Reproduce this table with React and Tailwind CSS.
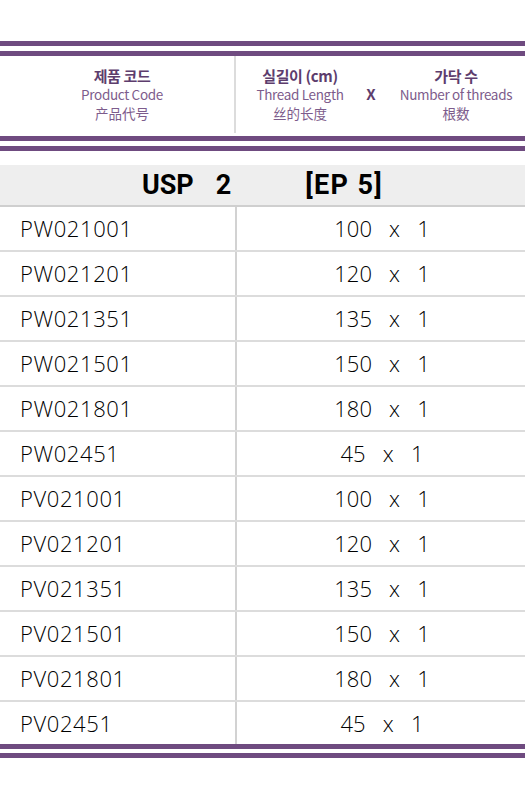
import React from "react";

const rows = [
  ["PW021001", "100"],
  ["PW021201", "120"],
  ["PW021351", "135"],
  ["PW021501", "150"],
  ["PW021801", "180"],
  ["PW02451", "45"],
  ["PV021001", "100"],
  ["PV021201", "120"],
  ["PV021351", "135"],
  ["PV021501", "150"],
  ["PV021801", "180"],
  ["PV02451", "45"],
];

function Band() {
  return <div className="h-[5px] bg-[#6f4b80]" />;
}

function HeadCell({ ko, en, zh, className = "" }) {
  return (
    <div className={"flex flex-col items-center " + className}>
      <p className="text-[15px] leading-[19px] font-bold text-[#5d3d6d] tracking-tight">
        {ko}
      </p>
      <p className="text-[13.5px] leading-[19px] text-[#7d5c8c] tracking-tight">
        {en}
      </p>
      <p className="text-[13.5px] leading-[19px] text-[#7d5c8c]">{zh}</p>
    </div>
  );
}

export default function App() {
  return (
    <section
      className="w-[525px] h-[800px] bg-white pt-[41px]"
      style={{ fontFamily: "'Open Sans', 'Noto Sans CJK KR', sans-serif" }}
    >
      {/* top bands */}
      <Band />
      <div className="h-[5px]" />
      <Band />

      {/* column titles */}
      <div
        className="flex h-[80px] pb-[3px]"
        style={{ fontFamily: "'Noto Sans CJK KR', 'Noto Sans', sans-serif" }}
      >
        <div className="w-[236px] border-r-2 border-[#dcdcdc] flex items-center justify-center pl-[10px]">
          <HeadCell ko="제품 코드" en="Product Code" zh="产品代号" />
        </div>
        <div className="flex-1 flex items-center">
          <HeadCell
            className="w-[128px]"
            ko="실길이 (cm)"
            en="Thread Length"
            zh="丝的长度"
          />
          <div className="w-[14px] text-center text-[15px] font-bold text-[#5d3d6d]">
            X
          </div>
          <HeadCell
            className="flex-1 pl-[9px]"
            ko="가닥 수"
            en="Number of threads"
            zh="根数"
          />
        </div>
      </div>

      <Band />
      <div className="h-[5px]" />
      <Band />

      {/* size header */}
      <div
        className="mt-[14px] h-[42px] bg-[#eeeeee] border-b-2 border-[#cfcfcf] flex items-center justify-center text-[27px] font-bold text-black"
        style={{ fontFamily: "Roboto, sans-serif" }}
      >
        <span>USP</span>
        <span className="ml-[22px]">2</span>
        <span className="ml-[74px] tracking-wider">[EP 5]</span>
      </div>

      {/* rows */}
      <div>
        {rows.map(([code, len], i) => (
          <div
            key={code}
            className={
              "flex text-[22px] font-light text-black " +
              (i === rows.length - 1
                ? "h-[42px]"
                : "h-[45px] border-b-2 border-[#dcdcdc]")
            }
          >
            <div className="w-[237px] border-r-2 border-[#d2d2d2] flex items-center pl-[20px] tracking-[0.6px]">
              {code}
            </div>
            <div className="flex-1 flex items-center justify-center whitespace-pre pl-[2px]">
              {len + "   x   1"}
            </div>
          </div>
        ))}
      </div>

      {/* bottom bands */}
      <Band />
      <div className="h-[4px]" />
      <Band />
    </section>
  );
}
